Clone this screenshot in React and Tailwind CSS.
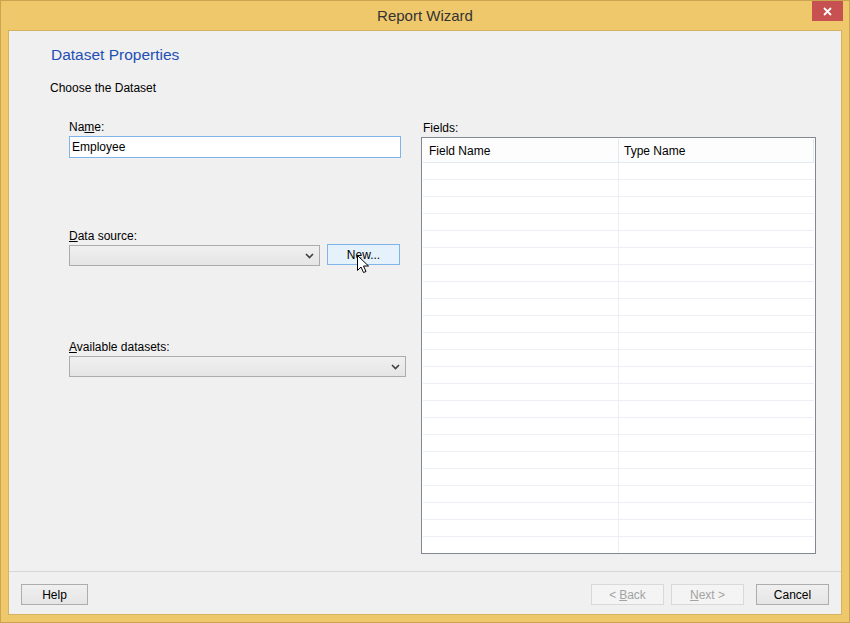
import React from "react";

const font = { fontFamily: '"Liberation Sans", Arial, sans-serif' };

const Chevron = () => (
  <svg width="9" height="6" viewBox="0 0 9 6" className="text-[#404040]">
    <path d="M1 1 L4.5 4.5 L8 1" fill="none" stroke="currentColor" strokeWidth="1.6" />
  </svg>
);

const Select = ({ className }) => (
  <div
    className={`h-[21px] border border-[#acacac] bg-gradient-to-b from-[#f0f0f0] to-[#e5e5e5] flex items-center justify-end pr-[5px] ${className}`}
  >
    <Chevron />
  </div>
);

const Button = ({ children, disabled, className = "w-[73px]" }) => (
  <div
    className={`h-[21px] flex items-center justify-center text-[12px] border ${
      disabled
        ? "border-[#d9d9d9] bg-[#f4f4f4] text-[#a3a3a3]"
        : "border-[#adadad] bg-gradient-to-b from-[#f0f0f0] to-[#e5e5e5] text-black"
    } ${className}`}
  >
    {children}
  </div>
);

const Cursor = () => (
  <svg
    width="13"
    height="19"
    viewBox="0 0 13 19"
    className="absolute left-[29px] top-[10px]"
  >
    <path
      d="M0.5 0.5 L0.5 15.5 L4 12 L6.5 17.5 L9 16.5 L6.5 11 L11.5 11 Z"
      fill="white"
      stroke="black"
      strokeWidth="1"
      strokeLinejoin="round"
    />
  </svg>
);

export default function App() {
  const rows = Array.from({ length: 23 });

  return (
    <div
      style={font}
      className="w-[850px] h-[623px] bg-[#f0c86c] border border-[#c9a550] flex flex-col"
    >
      {/* title bar */}
      <div className="h-[29px] flex items-center relative shrink-0">
        <div className="flex-1 text-center text-[15px] text-[#333333] pt-[1px]">
          Report Wizard
        </div>
        <div className="absolute right-[6px] top-0 w-[31px] h-[20px] bg-[#c75050] flex items-center justify-center">
          <svg width="9" height="9" viewBox="0 0 9 9">
            <path d="M1 1 L8 8 M8 1 L1 8" stroke="white" strokeWidth="1.8" />
          </svg>
        </div>
      </div>

      {/* client */}
      <div className="flex-1 mx-[7px] mb-[7px] bg-[#f0f0f0] border border-[#d3b262] flex flex-col">
        <div className="flex-1 flex flex-col">
          <div className="pl-[42px] pt-[13px]">
            <div className="text-[15.5px] leading-[22px] text-[#1f4fb4]">
              Dataset Properties
            </div>
            <div className="mt-[14px] -ml-[1px] text-[12px] leading-[16px] text-black">
              Choose the Dataset
            </div>
          </div>

          <div className="flex mt-[23px] pl-[60px]">
            {/* left column */}
            <div className="w-[337px] flex flex-col text-[12px] text-black">
              <div className="leading-[16px]">
                Na<u>m</u>e:
              </div>
              <div className="mt-[1px] h-[22px] w-[332px] bg-white border border-[#7eb4ea] flex items-center pl-[2px]">
                Employee
              </div>

              <div className="leading-[16px] mt-[70px]">
                <u>D</u>ata source:
              </div>
              <div className="mt-[1px] flex items-start">
                <Select className="w-[251px]" />
                <div className="ml-[7px] -mt-[1px] relative h-[21px] w-[73px] border border-[#7eb4ea] bg-[#e5f1fb] flex items-center justify-center">
                  New...
                  <Cursor />
                </div>
              </div>

              <div className="leading-[16px] mt-[73px]">
                <u>A</u>vailable datasets:
              </div>
              <Select className="mt-[1px] w-[337px]" />
            </div>

            {/* right column */}
            <div className="ml-[15px] flex flex-col text-[12px] text-black">
              <div className="leading-[16px] pl-[2px] mt-[1px]">Fields:</div>
              <div className="mt-[1px] w-[395px] h-[417px] bg-white border border-[#828790] p-[1px] overflow-hidden">
                <div className="flex h-[24px] border-b border-[#e3e9f0] bg-[#fdfdfe]">
                  <div className="w-[196px] border-r border-[#e3e9f0] pl-[6px] flex items-center">
                    Field Name
                  </div>
                  <div className="w-[195px] border-r border-[#e3e9f0] pl-[5px] flex items-center">
                    Type Name
                  </div>
                </div>
                {rows.map((_, i) => (
                  <div key={i} className="flex h-[17px] border-b border-[#eceff3]">
                    <div className="w-[196px] border-r border-[#eceff3]" />
                    <div className="w-[195px]" />
                  </div>
                ))}
              </div>
            </div>
          </div>
        </div>

        {/* footer */}
        <div className="border-t border-[#d7d7d7] h-[43px] pt-[12px] px-[12px] flex items-start">
          <Button className="w-[67px]">Help</Button>
          <div className="flex-1" />
          <Button disabled>
            &lt; <u className="ml-[3px]">B</u>ack
          </Button>
          <Button disabled className="w-[73px] ml-[7px]">
            <u>N</u>ext &gt;
          </Button>
          <Button className="w-[73px] ml-[12px]">Cancel</Button>
        </div>
      </div>
    </div>
  );
}
